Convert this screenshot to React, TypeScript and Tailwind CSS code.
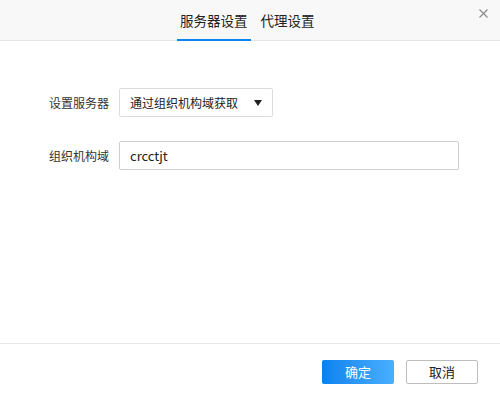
import React from "react";

export default function App() {
  const font = { fontFamily: '"Noto Sans CJK SC", "Noto Sans", sans-serif' };
  return (
    <div className="w-[500px] h-[400px] bg-white flex flex-col relative text-[#333]" style={font}>
      <div className="h-[41px] bg-[#f8f8f8] border-b border-[#e4e4e4] flex justify-start items-end gap-[10px] pl-[177px]">
        <div className="h-full flex flex-col justify-end">
          <div className="px-[3px] text-[13.5px] leading-[20px] pb-[9px] text-[#222] border-b-2 border-[#0a86ee] mb-[-1px]">服务器设置</div>
        </div>
        <div className="h-full flex flex-col justify-end">
          <div className="text-[13.5px] leading-[20px] pb-[10px] text-[#222]">代理设置</div>
        </div>
      </div>
      <button className="absolute right-[10px] top-[6px] w-[14px] h-[14px] flex items-center justify-center">
        <svg width="9" height="9" viewBox="0 0 9 9">
          <path d="M0.5 0.5L8.5 8.5M8.5 0.5L0.5 8.5" stroke="#888" strokeWidth="1.1" />
        </svg>
      </button>
      <div className="flex-1 flex flex-col pt-[47px] pl-[49px] gap-[24px]">
        <div className="flex items-center">
          <div className="w-[70px] text-[12px] text-[#333]">设置服务器</div>
          <div className="w-[154px] h-[29px] border border-[#dcdcdc] rounded-[2px] flex items-center justify-between pl-[10px] pr-[10px] text-[12px] text-[#222]">
            <span>通过组织机构域获取</span>
            <svg width="8" height="6" viewBox="0 0 8 6"><path d="M0 0H8L4 6Z" fill="#222" /></svg>
          </div>
        </div>
        <div className="flex items-center">
          <div className="w-[70px] text-[12px] text-[#333]">组织机构域</div>
          <div className="w-[340px] h-[29px] border border-[#cfcfcf] rounded-[2px] flex items-center pl-[10px] text-[13px] text-[#222]">crcctjt</div>
        </div>
      </div>
      <div className="h-[57px] border-t border-[#e8e8e8] flex justify-end items-start pt-[16px] pr-[22px] gap-[12px]">
        <button className="w-[72px] h-[24px] rounded-[2px] bg-gradient-to-r from-[#0682ee] to-[#48afff] text-white text-[13px] leading-[24px]">确定</button>
        <button className="w-[72px] h-[24px] rounded-[2px] border border-[#bdbdbd] bg-white text-[#222] text-[13px] leading-[22px]">取消</button>
      </div>
    </div>
  );
}
